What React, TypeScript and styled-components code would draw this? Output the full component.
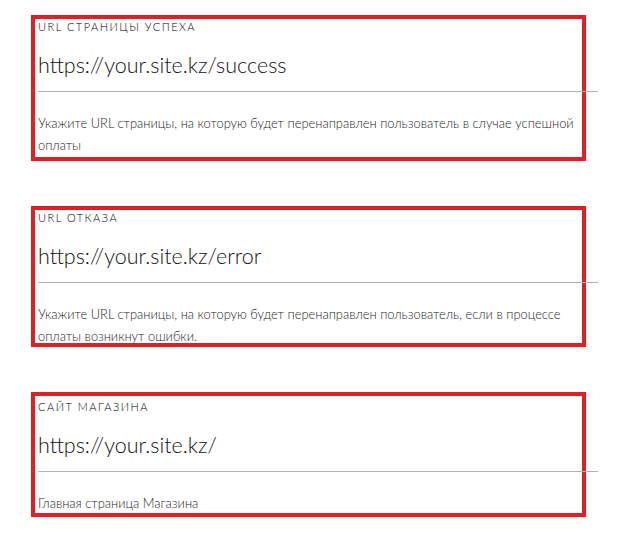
import React from "react";
import styled, { createGlobalStyle } from "styled-components";

const GlobalStyle = createGlobalStyle`
  html, body {
    margin: 0;
    padding: 0;
    background: #ffffff;
  }
  body {
    font-family: Lato, "Liberation Sans", sans-serif;
    color: #222222;
  }
`;

const Page = styled.div`
  display: flex;
  flex-direction: column;
  gap: 45px;
  padding: 15px 0 0 31px;
`;

// red annotation frame around each field
const Highlight = styled.section<{ $lead: number }>`
  box-sizing: border-box;
  width: 555px;
  border: 4px solid #e41e25;
  padding: ${(p) => p.$lead}px 0 0 3px;
  overflow: visible;
`;

const Label = styled.div`
  font-size: 11px;
  line-height: 16px;
  letter-spacing: 1.5px;
  font-weight: 300;
  text-transform: uppercase;
  color: #000000;
`;

const UrlInput = styled.div`
  width: 560px;
  padding-top: 5px;
  font-size: 21.5px;
  line-height: 51px;
  font-weight: 300;
  color: #111111;
  border-bottom: 1px solid #b3b3b3;
`;

const Help = styled.p<{ $tail: number }>`
  margin: 0 0 ${(p) => p.$tail}px;
  padding: 20px 0 0;
  width: 550px;
  font-size: 12.9px;
  line-height: 22px;
  font-weight: 300;
  color: #1e1e1e;
`;

const fields = [
  {
    label: "URL страницы успеха",
    value: "https://your.site.kz/success",
    help: "Укажите URL страницы, на которую будет перенаправлен пользователь в случае успешной оплаты",
    lead: 0,
    tail: 1,
  },
  {
    label: "URL отказа",
    value: "https://your.site.kz/error",
    help: "Укажите URL страницы, на которую будет перенаправлен пользователь, если в процессе оплаты возникнут ошибки.",
    lead: 0,
    tail: -4,
  },
  {
    label: "Сайт магазина",
    value: "https://your.site.kz/",
    help: "Главная страница Магазина",
    lead: 3,
    tail: -1,
  },
];

const App = () => {
  return (
    <>
      <GlobalStyle />
      <Page>
        {fields.map((f) => (
          <Highlight key={f.label} $lead={f.lead}>
            <Label>{f.label}</Label>
            <UrlInput>{f.value}</UrlInput>
            <Help $tail={f.tail}>{f.help}</Help>
          </Highlight>
        ))}
      </Page>
    </>
  );
};

export default App;
